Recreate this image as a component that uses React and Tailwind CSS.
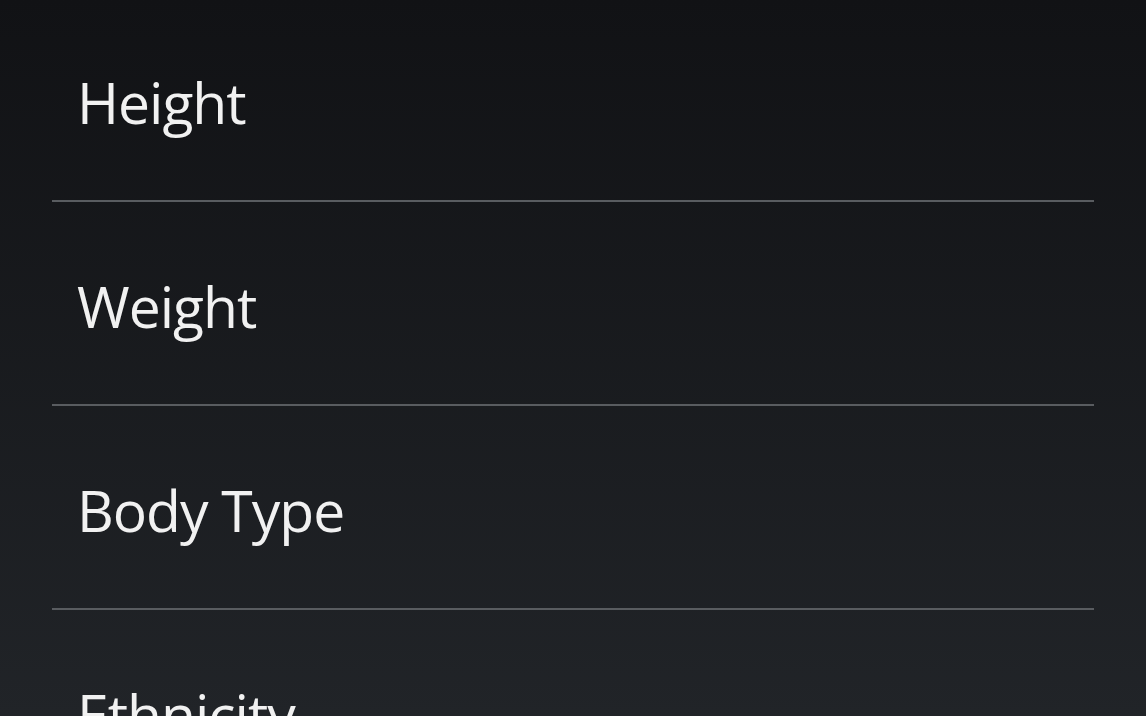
const ROWS = ['Height', 'Weight', 'Body Type', 'Ethnicity']

export default function App() {
  return (
    <div className="h-[716px] w-[1146px] overflow-hidden bg-linear-to-b from-[#111215] to-[#212428] font-['Open_Sans',sans-serif]">
      <div className="-mt-[2px] px-[52px]">
        {ROWS.map((label, i) => (
          <div
            key={label}
            className={`flex h-[204px] items-start pl-[25px] pt-[76px] ${i < ROWS.length - 1 ? 'border-b-2 border-[#595c60]' : ''}`}
          >
            <span className="text-[57px] leading-none tracking-[-1px] text-[#f1f1f1]">{label}</span>
          </div>
        ))}
      </div>
    </div>
  )
}
